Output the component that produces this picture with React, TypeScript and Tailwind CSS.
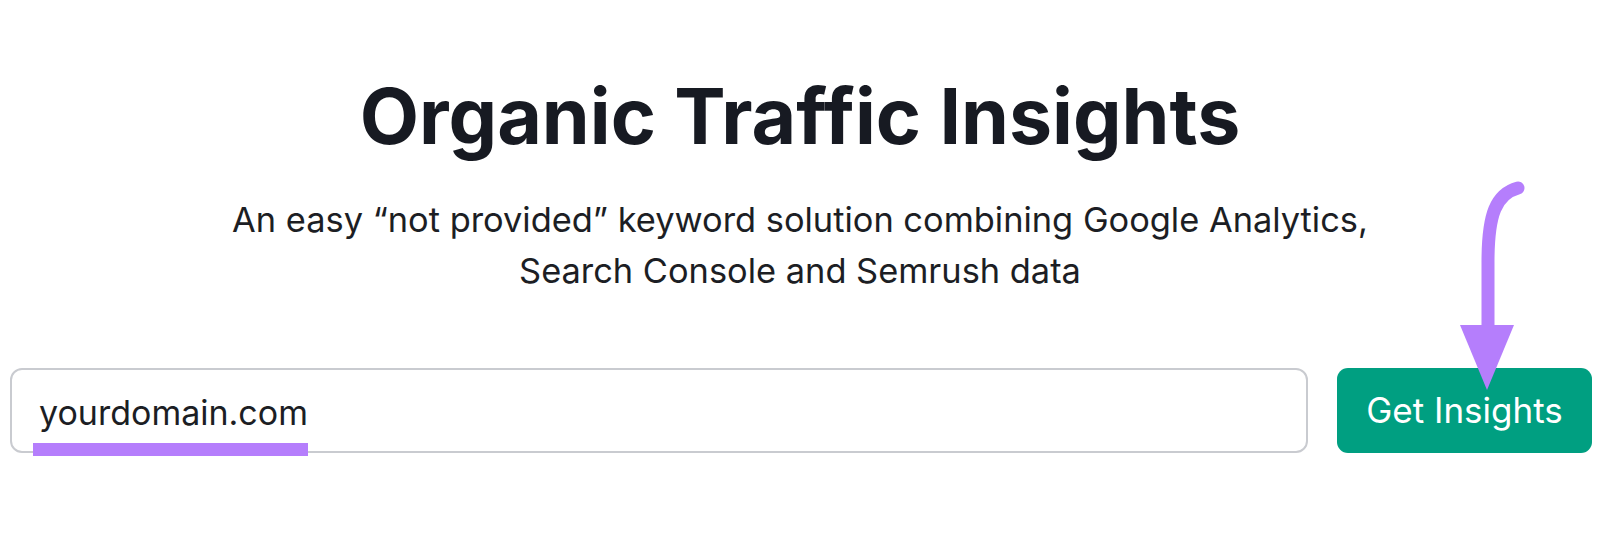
import React from 'react'

function Arrow() {
  return (
    <svg
      className="pointer-events-none absolute left-0 top-0"
      width="1600"
      height="539"
      viewBox="0 0 1600 539"
    >
      <path
        d="M1518 188 C1496 194 1488 214 1488 262 L1488 330"
        fill="none"
        stroke="#b57efc"
        strokeWidth="13"
        strokeLinecap="round"
      />
      <polygon points="1460,325 1514,325 1487,390" fill="#b57efc" />
    </svg>
  )
}

export default function App() {
  return (
    <div className="relative h-[539px] w-full overflow-hidden bg-white font-['Inter',sans-serif]">
      <div className="flex flex-col items-center">
        {/* Title */}
        <h1 className="mt-[78px] text-[77px] font-bold leading-none text-[#171a22]">
          Organic Traffic Insights
        </h1>

        {/* Subtitle */}
        <p className="mt-[39px] text-center text-[34.4px] leading-[51px] text-[#1c1e24]">
          An easy “not provided” keyword solution combining Google Analytics,
          <br />
          Search Console and Semrush data
        </p>
      </div>

      {/* Search row */}
      <div className="mt-[72px] flex items-stretch gap-[29px] pl-[10px] pr-[8px]">
        <div className="relative flex h-[85px] flex-1 items-center rounded-[12px] border-2 border-[#c9cbd0] pl-[27px]">
          <span className="mt-[4px] text-[34px] leading-none text-[#1c1e24]">yourdomain.com</span>
          <div className="absolute left-[21px] top-[73px] h-[13px] w-[275px] bg-[#b57efc]" />
        </div>
        <button className="flex h-[85px] w-[255px] items-center justify-center rounded-[11px] bg-[#009f81] text-[35px] leading-none text-white">
          Get Insights
        </button>
      </div>

      <Arrow />
    </div>
  )
}
